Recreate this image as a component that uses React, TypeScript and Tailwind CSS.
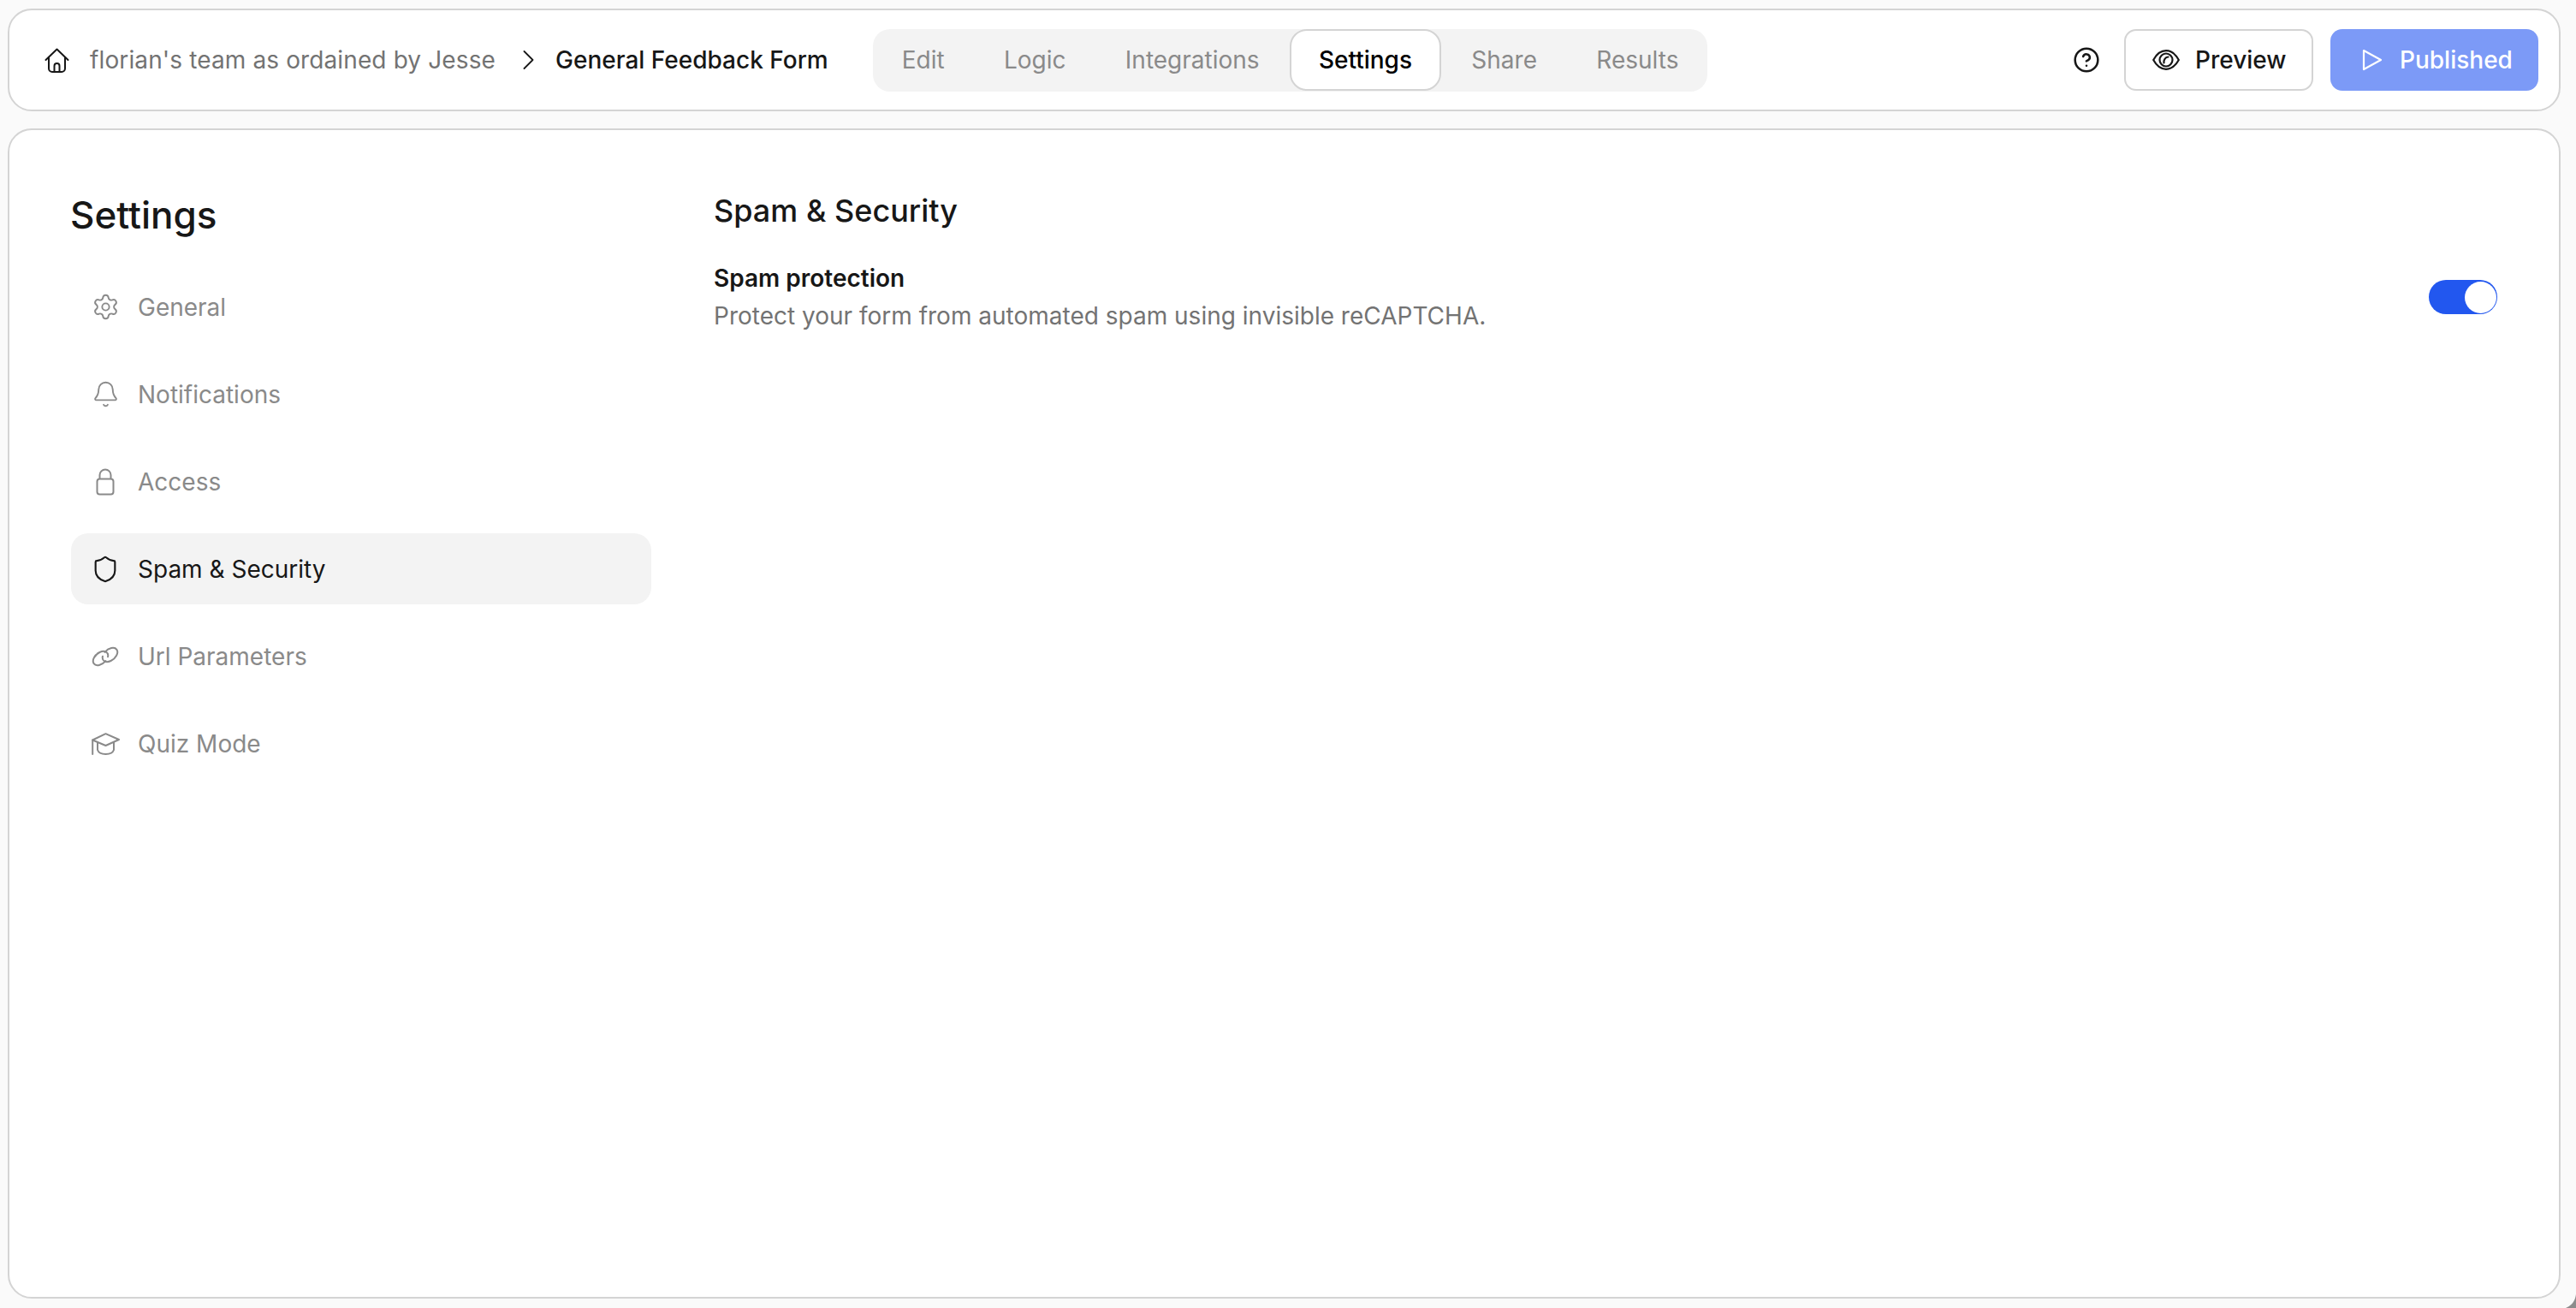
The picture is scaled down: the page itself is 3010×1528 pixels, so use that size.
import { ReactNode } from 'react';
import { CircleHelp, Settings, Bell, Shield } from 'lucide-react';

function HomeIcon() {
  return (
    <svg viewBox="0 0 29 29" className="h-[29px] w-[29px] shrink-0" fill="none" stroke="#171717" strokeWidth="2" strokeLinejoin="round" strokeLinecap="round">
      <path d="M1.500 14 14.500 1.500 27.500 14" />
      <path d="M5 11v13a4 4 0 0 0 4 4h11a4 4 0 0 0 4-4V11" />
      <path d="M11.500 28v-7a3 3 0 0 1 6 0v7" />
    </svg>
  );
}

function SlashChevron() {
  return (
    <svg viewBox="0 0 13 22" className="h-[22px] w-[13px] shrink-0" fill="none" stroke="#171717" strokeWidth="1.800" strokeLinecap="round" strokeLinejoin="round">
      <path d="M1.500 1 11.500 11l-10 10" />
    </svg>
  );
}

function EyeIcon() {
  return (
    <svg viewBox="0 0 32 24" className="h-[24px] w-[32px] shrink-0" fill="none" stroke="#171717" strokeWidth="2.200" strokeLinecap="round" strokeLinejoin="round">
      <path d="M1.200 12C5 5 10 1.200 16 1.200S27 5 30.800 12C27 19 22 22.800 16 22.800S5 19 1.200 12Z" />
      <circle cx="16" cy="12" r="7.500" />
      <path d="M13.500 15.500C13 12 15 8.800 18.500 8.500" />
    </svg>
  );
}

function PlayIcon() {
  return (
    <svg viewBox="0 0 24 26" className="h-[26px] w-[24px] shrink-0" fill="none" stroke="#ffffff" strokeWidth="2.200" strokeLinejoin="round">
      <path d="M2 2 22 13 2 24Z" />
    </svg>
  );
}

function LockIcon() {
  return (
    <svg viewBox="0 0 22 32" className="h-[32px] w-[22px] shrink-0" fill="none" stroke="#8a8a8a" strokeWidth="2">
      <rect x="1.500" y="12.500" width="19" height="18" rx="3" />
      <path d="M4.500 12.500V8a6.500 6.500 0 0 1 13 0v4.500" />
    </svg>
  );
}

function LinkIcon() {
  return (
    <svg viewBox="0 0 32 22" className="h-[22px] w-[32px] shrink-0 overflow-visible" fill="none" stroke="#8a8a8a" strokeWidth="2" strokeLinecap="round">
      <path d="M19.060 11.270A10 6.500 -40 1 0 16.520 16.140" />
      <path d="M12.940 10.730A10 6.500 -40 1 0 15.480 5.860" />
    </svg>
  );
}

function CapIcon() {
  return (
    <svg viewBox="0 0 33 26" className="h-[26px] w-[33px] shrink-0" fill="none" stroke="#8a8a8a" strokeWidth="2" strokeLinecap="round" strokeLinejoin="round">
      <path d="M1.200 8.500 16.500 1.200 32 8 16.500 15 1.200 8.500Z" />
      <path d="M1.200 8.500V25" />
      <path d="M7 11.500V20c1 3 5 5 9.500 5s8.500-2 9.500-5v-9" />
    </svg>
  );
}

const tabs = ['Edit', 'Logic', 'Integrations', 'Settings', 'Share', 'Results'];

const navItems: { label: string; icon: ReactNode }[] = [
  { label: 'General', icon: <Settings size={33} strokeWidth={1.400} className="shrink-0" /> },
  { label: 'Notifications', icon: <Bell size={33} strokeWidth={1.400} className="shrink-0" /> },
  { label: 'Access', icon: <LockIcon /> },
  { label: 'Spam & Security', icon: <Shield size={34} strokeWidth={1.500} className="shrink-0" /> },
  { label: 'Url Parameters', icon: <LinkIcon /> },
  { label: 'Quiz Mode', icon: <CapIcon /> },
];

export default function App() {
  return (
    <div className="relative flex h-[1528px] w-[3010px] flex-col gap-[20px] overflow-hidden bg-[#fafafa] pb-[11px] pl-[9px] pr-[18px] pt-[10px] font-['Inter',sans-serif] text-[28px] text-[#171717]">
      {/* top bar */}
      <header className="flex h-[120px] shrink-0 items-center justify-between rounded-[28px] border-2 border-[#d4d4d4] bg-white pl-[41px] pr-[24px]">
        <div className="flex items-center">
          <HomeIcon />
          <span className="ml-[24px] tracking-[0.12px] text-[#737373]">florian's team as ordained by Jesse</span>
          <div className="ml-[32px] mr-[25px]">
            <SlashChevron />
          </div>
          <span className="font-medium">General Feedback Form</span>
          <div className="ml-[52px] flex h-[73px] items-center gap-[1.300px] rounded-[20px] bg-[#f3f3f3]">
            {tabs.map((tab) =>
              tab === 'Settings' ? (
                <div key={tab} className="flex h-[72px] items-center rounded-[20px] border-2 border-[#d4d4d4] bg-white px-[32px] font-medium text-black">
                  {tab}
                </div>
              ) : (
                <div key={tab} className="flex h-[72px] items-center border-2 border-transparent px-[32px] text-[#8a8a8a]">
                  {tab}
                </div>
              ),
            )}
          </div>
        </div>
        <div className="flex items-center">
          <CircleHelp size={32} strokeWidth={1.900} className="text-[#171717]" />
          <button className="ml-[28px] flex h-[72px] w-[221px] items-center gap-[18px] rounded-[14px] border-2 border-[#d4d4d4] bg-white pl-[31px] font-medium">
            <EyeIcon />
            Preview
          </button>
          <button className="ml-[20px] flex h-[72px] w-[243px] items-center gap-[20px] rounded-[14px] bg-[#7c9af7] pl-[37px] font-medium text-white">
            <PlayIcon />
            Published
          </button>
        </div>
      </header>

      {/* settings card */}
      <main className="flex min-h-0 flex-1 rounded-[28px] border-2 border-[#d4d4d4] bg-white p-[72px]">
        <aside className="w-[678px] shrink-0">
          <h1 className="-ml-[1px] text-[44px] font-medium leading-[54px] text-[#171717]">Settings</h1>
          <nav className="mt-[39px] flex flex-col gap-[19px]">
            {navItems.map((item) =>
              item.label === 'Spam & Security' ? (
                <div key={item.label} className="flex h-[83px] items-center rounded-[20px] bg-[#f3f3f3] text-[#171717]">
                  <div className="flex w-[78px] justify-center pl-[2px]">{item.icon}</div>
                  {item.label}
                </div>
              ) : (
                <div key={item.label} className="flex h-[83px] items-center text-[#8a8a8a]">
                  <div className="flex w-[78px] justify-center pl-[2px]">{item.icon}</div>
                  {item.label}
                </div>
              ),
            )}
          </nav>
        </aside>
        <section className="ml-[73px] min-w-0 flex-1">
          <h2 className="text-[36px] font-medium leading-[44px]">Spam &amp; Security</h2>
          <div className="mt-[35px] flex items-center justify-between">
            <div>
              <div className="font-semibold leading-[44px]">Spam protection</div>
              <div className="leading-[44px] text-[#737373]">Protect your form from automated spam using invisible reCAPTCHA.</div>
            </div>
            <div className="flex h-[40px] w-[80px] items-center justify-end rounded-full bg-[#2257ef] pr-[1px]">
              <div className="h-[37px] w-[37px] rounded-full bg-white" />
            </div>
          </div>
        </section>
      </main>

      {/* window corner */}
      <svg viewBox="0 0 12 16" className="absolute bottom-0 right-0 h-[16px] w-[12px]">
        <path d="M12 0C11 8 7 13 0 16H12Z" fill="#8c8c8c" />
      </svg>
    </div>
  );
}
